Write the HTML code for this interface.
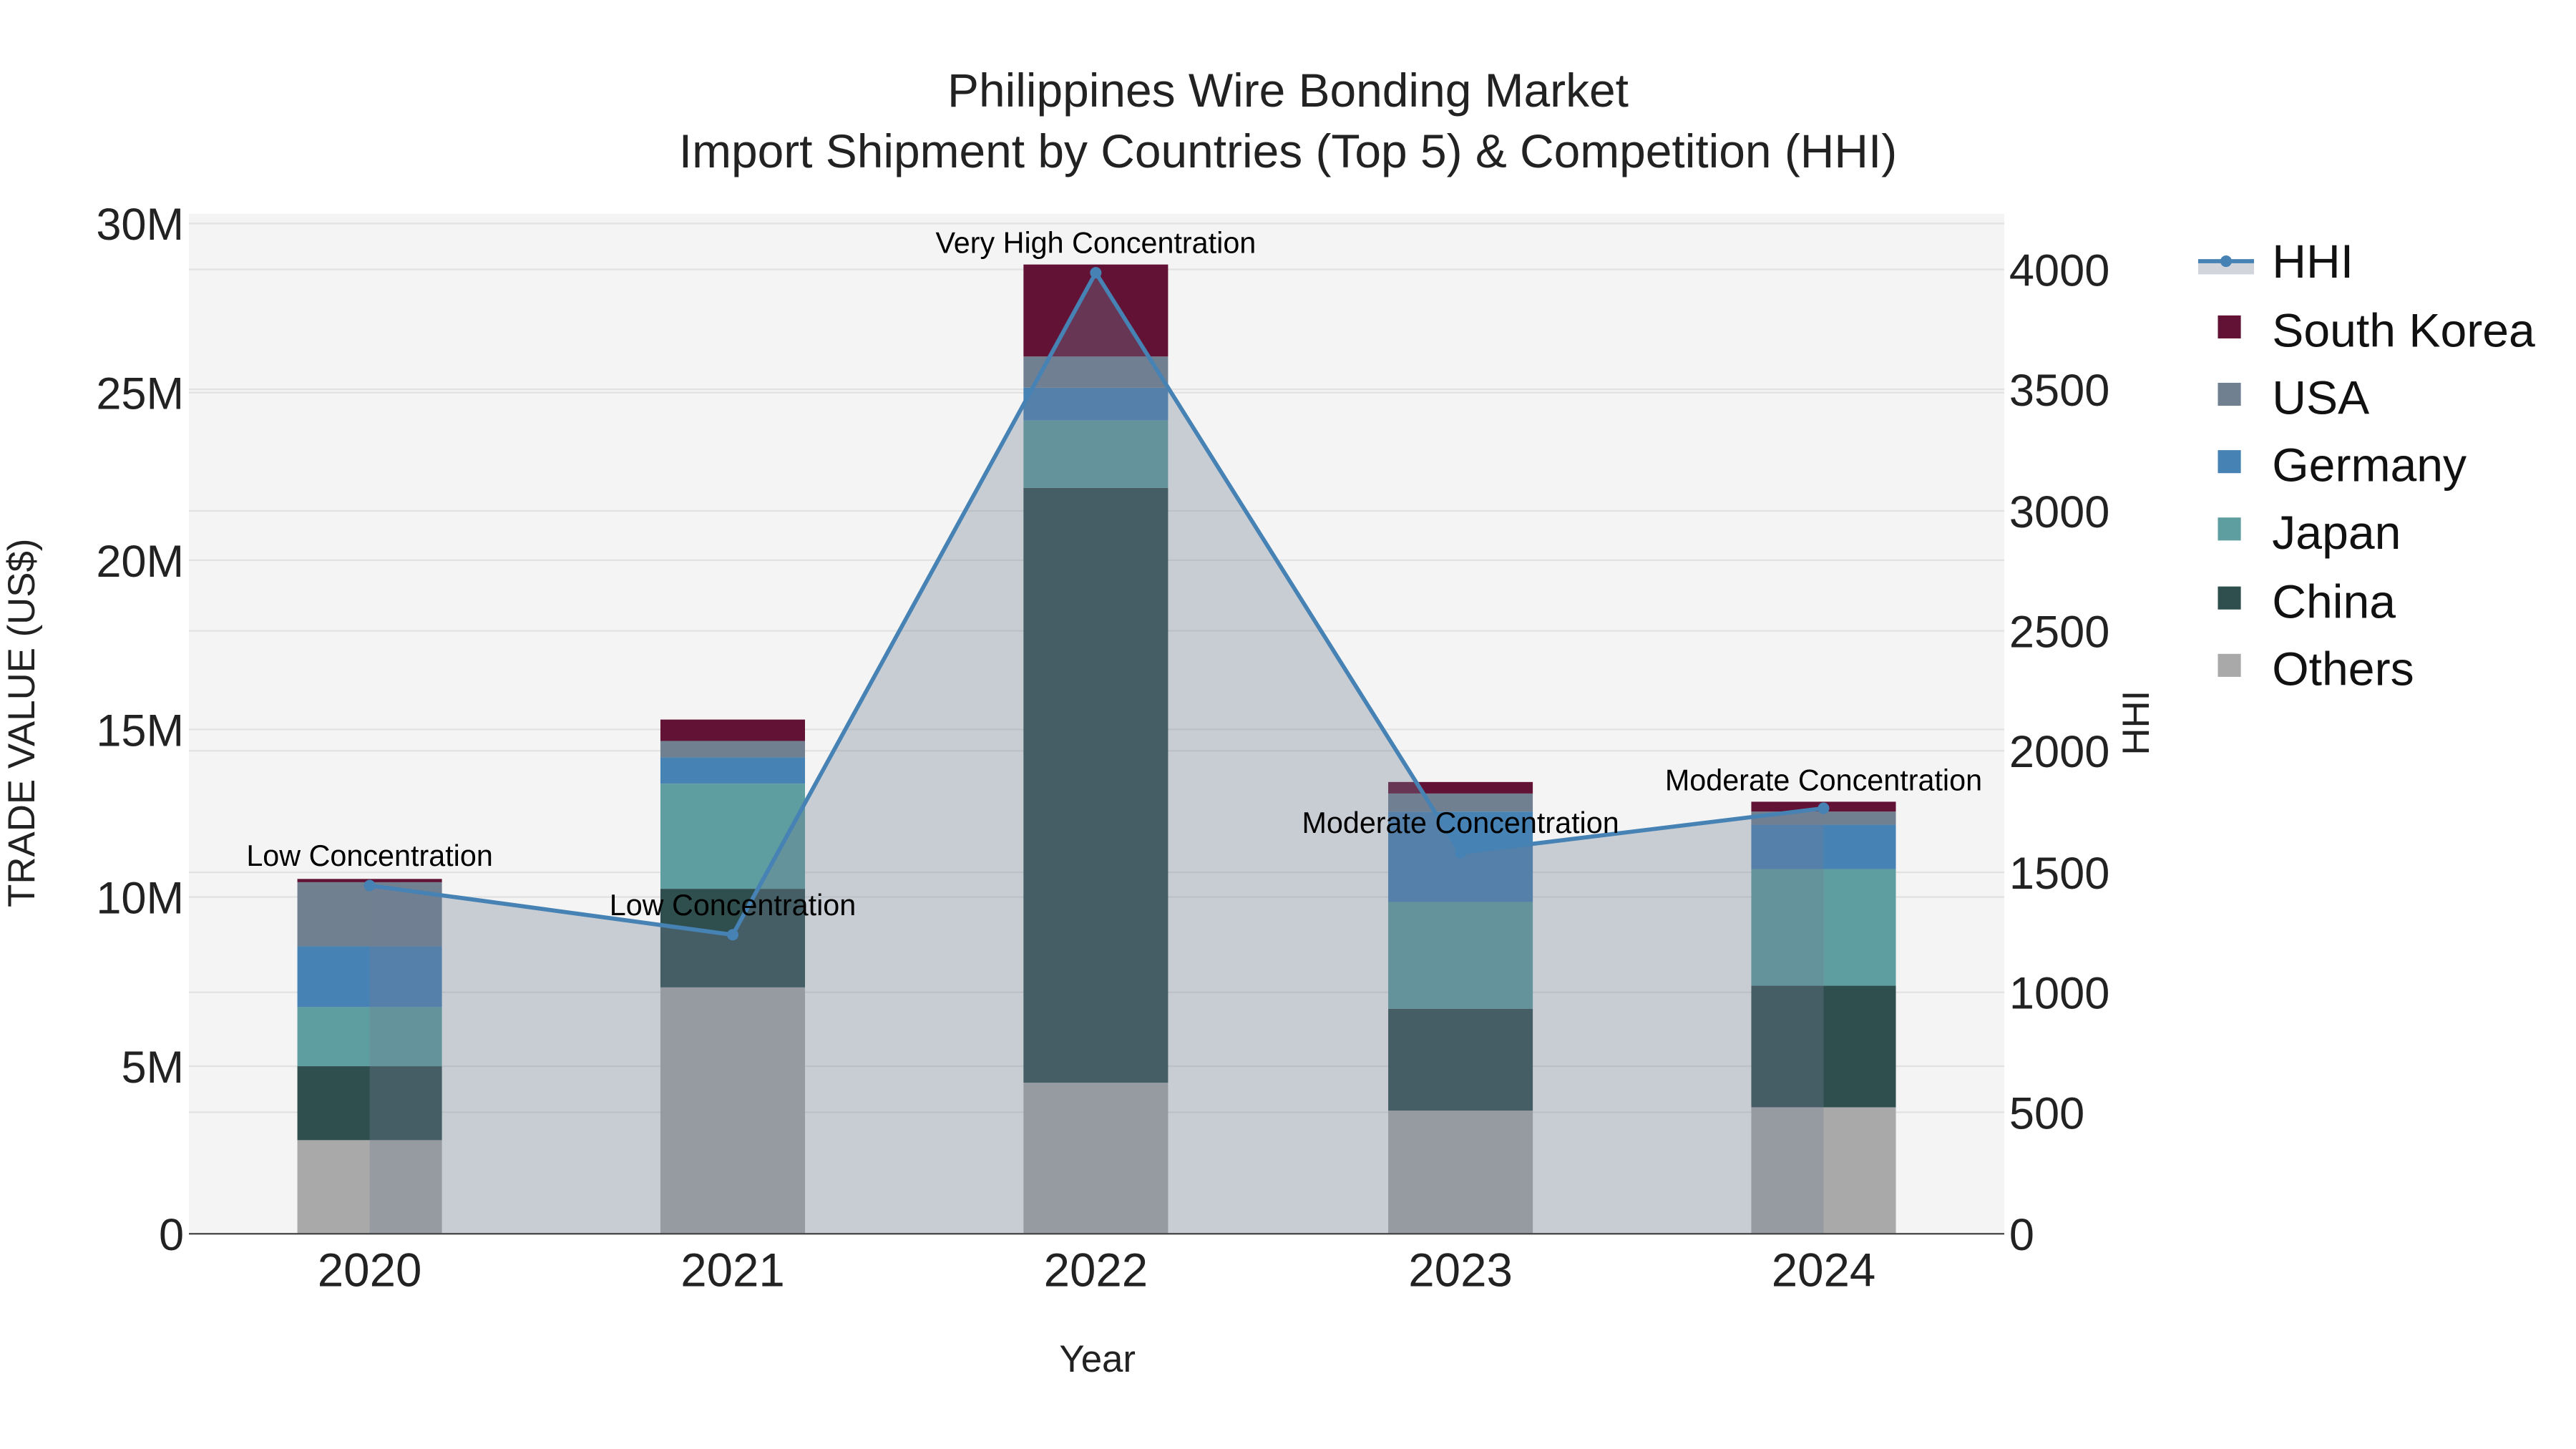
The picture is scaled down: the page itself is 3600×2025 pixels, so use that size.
<!DOCTYPE html>
<html><head><meta charset="utf-8"><style>
html,body{margin:0;padding:0;background:#fff;}
svg{display:block;}
text{font-family:"Liberation Sans",sans-serif;}
</style></head><body>
<svg width="3600" height="2025" viewBox="0 0 1568 882" xmlns="http://www.w3.org/2000/svg">
<rect x="0" y="0" width="1568" height="882" fill="#fff"/>
<rect x="115" y="130" width="1105" height="621" fill="#f4f4f4"/>
<g stroke="#e2e2e2" stroke-width="1">
<line x1="115" x2="1220" y1="136" y2="136"/><line x1="115" x2="1220" y1="239" y2="239"/>
<line x1="115" x2="1220" y1="341" y2="341"/><line x1="115" x2="1220" y1="444" y2="444"/>
<line x1="115" x2="1220" y1="546" y2="546"/><line x1="115" x2="1220" y1="649" y2="649"/>
<line x1="115" x2="1220" y1="164" y2="164"/><line x1="115" x2="1220" y1="237" y2="237"/>
<line x1="115" x2="1220" y1="311" y2="311"/><line x1="115" x2="1220" y1="384" y2="384"/>
<line x1="115" x2="1220" y1="457" y2="457"/><line x1="115" x2="1220" y1="531" y2="531"/>
<line x1="115" x2="1220" y1="604" y2="604"/><line x1="115" x2="1220" y1="677" y2="677"/>
</g>
<g>
<rect x="181" y="694" width="88" height="57" fill="#a9a9a9"/>
<rect x="181" y="649" width="88" height="45" fill="#2f4f4f"/>
<rect x="181" y="613" width="88" height="36" fill="#5f9ea0"/>
<rect x="181" y="576" width="88" height="37" fill="#4682b4"/>
<rect x="181" y="537" width="88" height="39" fill="#708090"/>
<rect x="181" y="535" width="88" height="2" fill="#621335"/>

<rect x="402" y="601" width="88" height="150" fill="#a9a9a9"/>
<rect x="402" y="541" width="88" height="60" fill="#2f4f4f"/>
<rect x="402" y="477" width="88" height="64" fill="#5f9ea0"/>
<rect x="402" y="461" width="88" height="16" fill="#4682b4"/>
<rect x="402" y="451" width="88" height="10" fill="#708090"/>
<rect x="402" y="438" width="88" height="13" fill="#621335"/>

<rect x="623" y="659" width="88" height="92" fill="#a9a9a9"/>
<rect x="623" y="297" width="88" height="362" fill="#2f4f4f"/>
<rect x="623" y="256" width="88" height="41" fill="#5f9ea0"/>
<rect x="623" y="236" width="88" height="20" fill="#4682b4"/>
<rect x="623" y="217" width="88" height="19" fill="#708090"/>
<rect x="623" y="161" width="88" height="56" fill="#621335"/>

<rect x="845" y="676" width="88" height="75" fill="#a9a9a9"/>
<rect x="845" y="614" width="88" height="62" fill="#2f4f4f"/>
<rect x="845" y="549" width="88" height="65" fill="#5f9ea0"/>
<rect x="845" y="494" width="88" height="55" fill="#4682b4"/>
<rect x="845" y="483" width="88" height="11" fill="#708090"/>
<rect x="845" y="476" width="88" height="7" fill="#621335"/>

<rect x="1066" y="674" width="88" height="77" fill="#a9a9a9"/>
<rect x="1066" y="600" width="88" height="74" fill="#2f4f4f"/>
<rect x="1066" y="529" width="88" height="71" fill="#5f9ea0"/>
<rect x="1066" y="502" width="88" height="27" fill="#4682b4"/>
<rect x="1066" y="494" width="88" height="8" fill="#708090"/>
<rect x="1066" y="488" width="88" height="6" fill="#621335"/>
</g>
<polygon points="225,539 446,569 667,166 889,519 1110,492 1110,751 225,751" fill="rgb(115,127,148)" fill-opacity="0.333"/>
<polyline points="225,539 446,569 667,166 889,519 1110,492" fill="none" stroke="#4682b4" stroke-width="2.5"/>
<g fill="#4682b4"><circle cx="225" cy="539" r="3.5"/><circle cx="446" cy="569" r="3.5"/><circle cx="667" cy="166" r="3.5"/><circle cx="889" cy="519" r="3.5"/><circle cx="1110" cy="492" r="3.5"/></g>
<line x1="115" x2="1220" y1="751" y2="751" stroke="#444" stroke-width="1"/>
<g font-size="18" fill="#000" text-anchor="middle">
<text x="225" y="527">Low Concentration</text>
<text x="446" y="557">Low Concentration</text>
<text x="667" y="154">Very High Concentration</text>
<text x="889" y="507">Moderate Concentration</text>
<text x="1110" y="481">Moderate Concentration</text>
</g>
<g text-anchor="middle" fill="#222" font-size="28.7">
<text x="784" y="65">Philippines Wire Bonding Market</text>
<text x="784" y="102">Import Shipment by Countries (Top 5) &amp; Competition (HHI)</text>
</g>
<g font-size="27.5" fill="#222" text-anchor="end">
<text x="112" y="146">30M</text><text x="112" y="249">25M</text><text x="112" y="351">20M</text>
<text x="112" y="454">15M</text><text x="112" y="556">10M</text><text x="112" y="659">5M</text><text x="112" y="761">0</text>
</g>
<g font-size="27.5" fill="#222" text-anchor="start">
<text x="1223" y="174">4000</text><text x="1223" y="247">3500</text><text x="1223" y="321">3000</text>
<text x="1223" y="394">2500</text><text x="1223" y="467">2000</text><text x="1223" y="541">1500</text>
<text x="1223" y="614">1000</text><text x="1223" y="687">500</text><text x="1223" y="761">0</text>
</g>
<g font-size="28.5" fill="#222" text-anchor="middle">
<text x="225" y="783">2020</text><text x="446" y="783">2021</text><text x="667" y="783">2022</text><text x="889" y="783">2023</text><text x="1110" y="783">2024</text>
</g>
<text x="668" y="835" font-size="23" fill="#222" text-anchor="middle">Year</text>
<text transform="translate(21,440) rotate(-90)" font-size="23" fill="#222" text-anchor="middle">TRADE VALUE (US$)</text>
<text transform="translate(1308,440) rotate(-90)" font-size="23" fill="#222" text-anchor="middle">HHI</text>
<rect x="1338" y="159" width="34" height="8" fill="#d1d5db"/>
<line x1="1338" x2="1372" y1="159" y2="159" stroke="#4682b4" stroke-width="2.5"/>
<circle cx="1355" cy="159" r="3.5" fill="#4682b4"/>
<g font-size="28.8" fill="#111">
<text x="1383" y="169">HHI</text>
<text x="1383" y="211">South Korea</text>
<text x="1383" y="252">USA</text>
<text x="1383" y="293">Germany</text>
<text x="1383" y="334">Japan</text>
<text x="1383" y="376">China</text>
<text x="1383" y="417">Others</text>
</g>
<rect x="1350" y="192" width="14" height="14" fill="#621335"/>
<rect x="1350" y="233" width="14" height="14" fill="#708090"/>
<rect x="1350" y="274" width="14" height="14" fill="#4682b4"/>
<rect x="1350" y="315" width="14" height="14" fill="#5f9ea0"/>
<rect x="1350" y="357" width="14" height="14" fill="#2f4f4f"/>
<rect x="1350" y="398" width="14" height="14" fill="#a9a9a9"/>
</svg>
</body></html>
